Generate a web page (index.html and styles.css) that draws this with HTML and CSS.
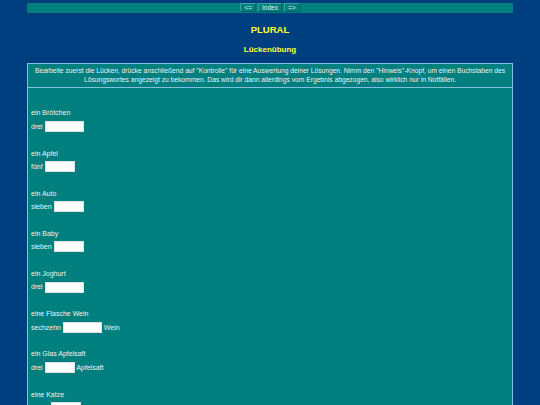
FILE: index.html
```html
<!DOCTYPE html>
<html lang="de">
<head>
<meta charset="utf-8">
<title>PLURAL</title>
<link rel="stylesheet" href="styles.css">
</head>
<body>
<div class="navbar">
  <button class="navbtn">&lt;=</button>
  <button class="navbtn">Index</button>
  <button class="navbtn">=&gt;</button>
</div>
<h1 class="title">PLURAL</h1>
<h2 class="subtitle">Lückenübung</h2>
<div class="exbox">
  <div class="instructions">Bearbeite zuerst die Lücken, drücke anschließend auf "Kontrolle" für eine Auswertung deiner Lösungen. Nimm den "Hinweis"-Knopf, um einen Buchstaben des Lösungswortes angezeigt zu bekommen. Das wird dir dann allerdings vom Ergebnis abgezogen, also wirklich nur in Notfällen.</div>
  <div class="content">
    <div class="item"><div class="line">ein Brötchen</div><div class="line">drei <input class="gap w39" type="text"></div></div>
    <div class="item"><div class="line">ein Apfel</div><div class="line">fünf <input class="gap w30" type="text"></div></div>
    <div class="item"><div class="line">ein Auto</div><div class="line">sieben <input class="gap w30" type="text"></div></div>
    <div class="item"><div class="line">ein Baby</div><div class="line">sieben <input class="gap w30" type="text"></div></div>
    <div class="item"><div class="line">ein Joghurt</div><div class="line">drei <input class="gap w39" type="text"></div></div>
    <div class="item"><div class="line">eine Flasche Wein</div><div class="line">sechzehn <input class="gap w39" type="text"> Wein</div></div>
    <div class="item"><div class="line">ein Glas Apfelsaft</div><div class="line">drei <input class="gap w30" type="text"> Apfelsaft</div></div>
    <div class="item"><div class="line">eine Katze</div><div class="line">sechs <input class="gap w30" type="text"></div></div>
  </div>
</div>
</body>
</html>
```
FILE: styles.css
```css
html, body {
  background: #003f7f;
}
body {
  margin: 3px 27px 0 27px;
  font-family: "Liberation Sans", Arial, sans-serif;
  color: #f2f2f2;
}
.navbar {
  background: #007f7f;
  height: 10px;
  display: flex;
  justify-content: center;
  align-items: flex-start;
  gap: 2px;
}
.navbtn {
  font-family: "Liberation Sans", Arial, sans-serif;
  font-size: 6.5px;
  line-height: 7px;
  color: #e8f4f4;
  background: #007f7f;
  border: 1px solid #3fa0a0;
  border-right-color: #005f5f;
  border-bottom-color: #005f5f;
  padding: 0 3px;
  margin: 0;
  height: 9px;
}
.title {
  margin: 11px 0 0 0;
  text-align: center;
  font-size: 9.5px;
  line-height: 12px;
  color: #ffff33;
  font-weight: bold;
}
.subtitle {
  margin: 9px 0 0 0;
  text-align: center;
  font-size: 8px;
  line-height: 10px;
  color: #ffff33;
  font-weight: bold;
}
.exbox {
  margin-top: 8px;
  border: 1px solid #7fbfdf;
  background: #007f7f;
}
.instructions {
  text-align: center;
  font-size: 6.7px;
  line-height: 9px;
  padding: 2px 2px 3px 2px;
  border-bottom: 1px solid #7fbfdf;
}
.content {
  padding: 5px 3px 20px 3px;
  font-size: 7px;
}
.item {
  padding-top: 13.4px;
}
.line {
  height: 13.4px;
  line-height: 13.4px;
  display: flex;
  align-items: center;
  white-space: pre;
}
.gap {
  height: 11px;
  box-sizing: border-box;
  background: #ffffff;
  border: 1px solid #e0e0e0;
  padding: 0;
  margin: 0;
  font-size: 7px;
}
.w39 { width: 39px; }
.w30 { width: 30px; }
```
